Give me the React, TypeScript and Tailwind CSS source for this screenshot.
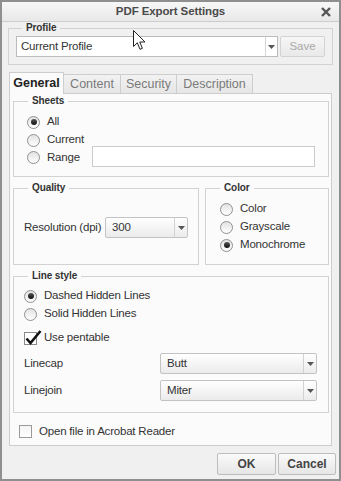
import React from "react";

const txt = "text-[11.5px] tracking-[-0.2px] text-[#333]";

function Radio({ checked }: { checked?: boolean }) {
  return (
    <span className="w-[13px] h-[13px] rounded-full border border-[#8f9090] bg-linear-to-b from-[#e2e2e2] to-white shrink-0 flex items-center justify-center">
      {checked && <span className="w-[6px] h-[6px] rounded-full bg-linear-to-b from-[#555] to-[#111]" />}
    </span>
  );
}

function Arrow() {
  return (
    <svg width="7" height="4" viewBox="0 0 7 4">
      <path d="M0 0 L7 0 L3.5 4 Z" fill="#555" />
    </svg>
  );
}

function Select({ value, className }: { value: string; className: string }) {
  return (
    <div className={`h-[21px] flex items-center border border-[#c3c3c3] rounded-[2px] bg-linear-to-b from-white to-[#ebebeb] ${className}`}>
      <span className={`flex-1 pl-[6px] ${txt}`}>{value}</span>
      <span className="w-[13px] h-full border-l border-[#d2d2d2] flex items-center justify-center">
        <Arrow />
      </span>
    </div>
  );
}

function Legend({ children }: { children: React.ReactNode }) {
  return (
    <legend className="ml-[14px] px-[4px] text-[10px] leading-[12px] font-bold tracking-[-0.1px] text-[#333]">{children}</legend>
  );
}

function RadioRow({ checked, label }: { checked?: boolean; label: string }) {
  return (
    <div className="h-[18px] flex items-center gap-[7px]">
      <Radio checked={checked} />
      <span className={`${txt} whitespace-nowrap`}>{label}</span>
    </div>
  );
}

export default function App() {
  return (
    <div className="relative w-[341px] h-[481px] bg-[#f0f0f0] border-2 border-[#8f8f8f] flex flex-col font-['Liberation_Sans',Arial,sans-serif] text-[#333] overflow-hidden">
      {/* Title bar */}
      <div className="h-[20px] shrink-0 flex items-center bg-linear-to-b from-[#f7f7f7] to-[#e8e8e8] border-b border-[#cdcdcd]">
        <span className="w-[24px]" />
        <span className="flex-1 text-center text-[11.5px] tracking-[-0.1px] font-bold text-[#4a4a4a]">PDF Export Settings</span>
        <span className="w-[24px] flex items-center justify-center pr-[2px]">
          <svg width="10" height="10" viewBox="0 0 10 10">
            <path d="M1 1 L9 9 M9 1 L1 9" stroke="#555" strokeWidth="2.4" />
          </svg>
        </span>
      </div>

      {/* Profile */}
      <fieldset className="mx-[6px] h-[43px] border border-[#d2d2d2]">
        <legend className="ml-[13px] px-[4px] text-[10px] leading-[12px] font-bold tracking-[-0.1px] text-[#333]">Profile</legend>
        <div className="flex items-center pl-[7px] mt-[2px]">
          <div className="w-[262px] h-[21px] flex items-center bg-white border border-[#bcbcbc]">
            <span className={`flex-1 pl-[4px] ${txt}`}>Current Profile</span>
            <span className="w-[12px] h-full border-l border-[#d6d6d6] flex items-center justify-center">
              <Arrow />
            </span>
          </div>
          <button className="ml-[2px] w-[45px] h-[21px] border border-[#d3d3d3] rounded-[2px] bg-linear-to-b from-[#f6f6f6] to-[#e9e9e9] text-[11.5px] text-[#a9a9a9]">
            Save
          </button>
        </div>
      </fieldset>

      {/* Tabs */}
      <div className="ml-[7px] mt-[7px] h-[21px] flex items-end">
        <div className="relative z-10 w-[55px] h-[22px] -mb-px flex items-center justify-center bg-[#fbfbfb] border border-b-0 border-[#cdcdcd] text-[12.5px] font-bold text-[#222]">
          General
        </div>
        <div className="-ml-px w-[58px] h-[19px] flex items-center justify-center bg-linear-to-b from-[#f2f2f2] to-[#e6e6e6] border border-b-0 border-[#cdcdcd] text-[12.5px] text-[#7a7a7a]">
          Content
        </div>
        <div className="-ml-px w-[57px] h-[19px] flex items-center justify-center bg-linear-to-b from-[#f2f2f2] to-[#e6e6e6] border border-b-0 border-[#cdcdcd] text-[12.5px] text-[#7a7a7a]">
          Security
        </div>
        <div className="-ml-px w-[77px] h-[19px] flex items-center justify-center bg-linear-to-b from-[#f2f2f2] to-[#e6e6e6] border border-b-0 border-[#cdcdcd] text-[12.5px] text-[#7a7a7a]">
          Description
        </div>
      </div>

      {/* Panel */}
      <div className="ml-[7px] w-[323px] h-[353px] bg-[#fbfbfb] border border-[#cdcdcd] flex flex-col">
        {/* Sheets */}
        <fieldset className="ml-[3px] mt-[1px] w-[316px] h-[82px] border border-[#d2d2d2]">
          <Legend>Sheets</Legend>
          <div className="pl-[13px] pt-[6px] flex flex-col">
            <RadioRow checked label="All" />
            <RadioRow label="Current" />
            <div className="h-[21px] -mt-[3px] flex items-center">
              <div className="w-[65px] mt-[2px] flex items-center gap-[7px]">
                <Radio />
                <span className={txt}>Range</span>
              </div>
              <div className="w-[223px] h-[21px] bg-white border border-[#cbcbcb]" />
            </div>
          </div>
        </fieldset>

        {/* Quality + Color */}
        <div className="ml-[3px] mt-[5px] flex gap-[6px]">
          <fieldset className="w-[186px] h-[83px] border border-[#d2d2d2]">
            <Legend>Quality</Legend>
            <div className="pl-[10px] pt-[23px] flex items-center">
              <span className={`w-[81px] whitespace-nowrap ${txt}`}>Resolution (dpi)</span>
              <Select value="300" className="w-[83px]" />
            </div>
          </fieldset>
          <fieldset className="w-[124px] h-[83px] border border-[#d2d2d2]">
            <Legend>Color</Legend>
            <div className="pl-[14px] pt-[6px] flex flex-col">
              <RadioRow label="Color" />
              <RadioRow label="Grayscale" />
              <RadioRow checked label="Monochrome" />
            </div>
          </fieldset>
        </div>

        {/* Line style */}
        <fieldset className="ml-[3px] mt-[5px] w-[316px] h-[143px] border border-[#d2d2d2]">
          <Legend>Line style</Legend>
          <div className="pl-[10px] pt-[5px] flex flex-col">
            <RadioRow checked label="Dashed Hidden Lines" />
            <RadioRow label="Solid Hidden Lines" />
            <div className="mt-[6px] h-[18px] flex items-center gap-[7px]">
              <span className="relative w-[13px] h-[13px] border border-[#8a8a8a] bg-white shrink-0">
                <svg className="absolute left-[0px] top-[-3px]" width="17" height="15" viewBox="0 0 17 15">
                  <path d="M1.5 8.5 L5.5 13 L15.5 1" fill="none" stroke="#111" strokeWidth="2.6" />
                </svg>
              </span>
              <span className={txt}>Use pentable</span>
            </div>
            <div className="mt-[6px] flex items-center">
              <span className={`w-[136px] ${txt}`}>Linecap</span>
              <Select value="Butt" className="w-[157px]" />
            </div>
            <div className="mt-[6px] flex items-center">
              <span className={`w-[136px] ${txt}`}>Linejoin</span>
              <Select value="Miter" className="w-[157px]" />
            </div>
          </div>
        </fieldset>

        {/* Open file */}
        <div className="ml-[9px] mt-[10px] flex items-center gap-[7px]">
          <span className="w-[13px] h-[13px] border border-[#9a9a9a] bg-linear-to-b from-[#f4f4f4] to-white shrink-0" />
          <span className={txt}>Open file in Acrobat Reader</span>
        </div>
      </div>

      {/* Buttons */}
      <div className="mt-[7px] pr-[3px] flex justify-end gap-[2px]">
        <button className="w-[59px] h-[22px] border border-[#bdbdbd] rounded-[2px] bg-linear-to-b from-[#fafafa] to-[#e6e6e6] text-[12px] font-bold text-[#444]">
          OK
        </button>
        <button className="w-[58px] h-[22px] border border-[#bdbdbd] rounded-[2px] bg-linear-to-b from-[#fafafa] to-[#e6e6e6] text-[12px] font-bold text-[#444]">
          Cancel
        </button>
      </div>

      {/* Mouse cursor overlay */}
      <svg className="absolute left-[131px] top-[28px]" width="14" height="21" viewBox="0 0 14 21">
        <path d="M0.5 0.5 L0.5 16.5 L4.3 12.8 L7 19.3 L9.4 18.3 L6.8 12 L12 12 Z" fill="white" stroke="#222" strokeWidth="1" strokeLinejoin="round" />
      </svg>
    </div>
  );
}
